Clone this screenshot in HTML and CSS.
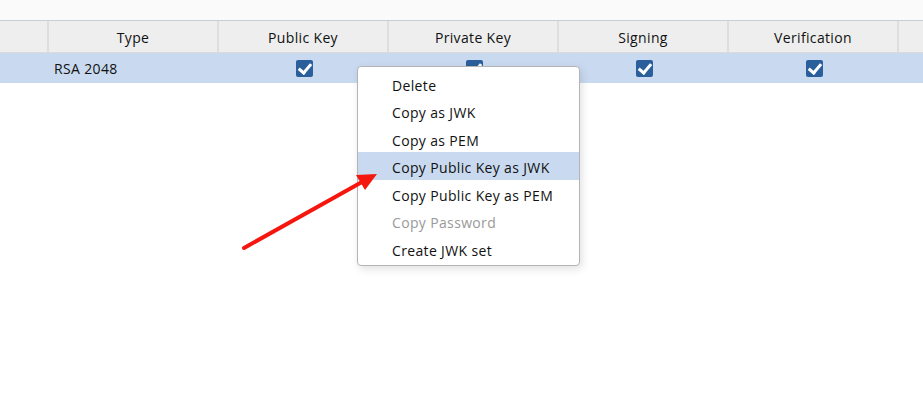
FILE: index.html
```html
<!DOCTYPE html>
<html lang="en">
  <head>
    <meta charset="UTF-8" />
    <title>Keys</title>
    <link rel="stylesheet" href="styles.css">
  </head>
  <body>
    <div class="toolbar"></div>
    <div class="table">
      <div class="row header">
        <div class="cell first"></div>
        <div class="cell">Type</div>
        <div class="cell">Public Key</div>
        <div class="cell">Private Key</div>
        <div class="cell">Signing</div>
        <div class="cell">Verification</div>
        <div class="cell last"></div>
      </div>
      <div class="row selected">
        <div class="cell first"></div>
        <div class="cell left">RSA 2048</div>
        <div class="cell"><span class="check"></span></div>
        <div class="cell"><span class="check"></span></div>
        <div class="cell"><span class="check"></span></div>
        <div class="cell"><span class="check"></span></div>
        <div class="cell last"></div>
      </div>
    </div>

    <div class="menu">
      <div class="item">Delete</div>
      <div class="item">Copy as JWK</div>
      <div class="item">Copy as PEM</div>
      <div class="item active">Copy Public Key as JWK</div>
      <div class="item">Copy Public Key as PEM</div>
      <div class="item disabled">Copy Password</div>
      <div class="item">Create JWK set</div>
    </div>

    <svg class="arrow" width="923" height="395" viewBox="0 0 923 395">
      <line x1="244" y1="248" x2="362" y2="182" stroke="#f5170f" stroke-width="4" stroke-linecap="round" />
      <polygon points="377,174 356,175 365,190" fill="#f5170f" />
    </svg>
  </body>
</html>
```

FILE: styles.css
```css
body {
  margin: 0;
  background-color: #fff;
  font-family: "Open Sans", "Noto Sans", sans-serif;
  font-size: 14px;
  letter-spacing: 0.35px;
  color: #111;
}
.toolbar {
  height: 20px;
  background-color: #fafafa;
  border-bottom: 1px solid #c5cfda;
}
.row {
  display: flex;
}
.header {
  height: 31px;
  background-color: #eeeeee;
  border-bottom: 1px solid #dadada;
}
.header .cell {
  border-right: 2px solid #dedede;
  padding-top: 2px;
}
.selected {
  height: 30px;
  background-color: #c9daf0;
}
.cell {
  width: 170px;
  box-sizing: border-box;
  display: flex;
  justify-content: center;
  align-items: center;
}
.cell.first {
  width: 49px;
}
.cell.last {
  flex: 1;
  width: auto;
}
.header .cell.last {
  border-right: none;
}
.cell.left {
  justify-content: flex-start;
  padding-left: 5px;
}
.check {
  width: 17px;
  height: 17px;
  border-radius: 2px;
  background-color: #2b5f9b;
  position: relative;
}
.check::after {
  content: "";
  position: absolute;
  left: 5px;
  top: 1px;
  width: 5px;
  height: 10px;
  border: solid #fff;
  border-width: 0 3px 3px 0;
  transform: rotate(40deg);
}
.menu {
  position: absolute;
  left: 357px;
  top: 66px;
  width: 221px;
  padding: 2.5px 0;
  background-color: #fff;
  border: 1px solid #b4b4b4;
  border-radius: 4px;
  box-shadow: 2px 3px 8px rgba(0, 0, 0, 0.12);
}
.item {
  height: 27.5px;
  box-sizing: border-box;
  padding-top: 4px;
  line-height: 23px;
  padding-left: 34px;
}
.item.active {
  background-color: #c9daf0;
}
.item.disabled {
  color: #999;
}
.arrow {
  position: absolute;
  left: 0;
  top: 0;
  pointer-events: none;
}
```
